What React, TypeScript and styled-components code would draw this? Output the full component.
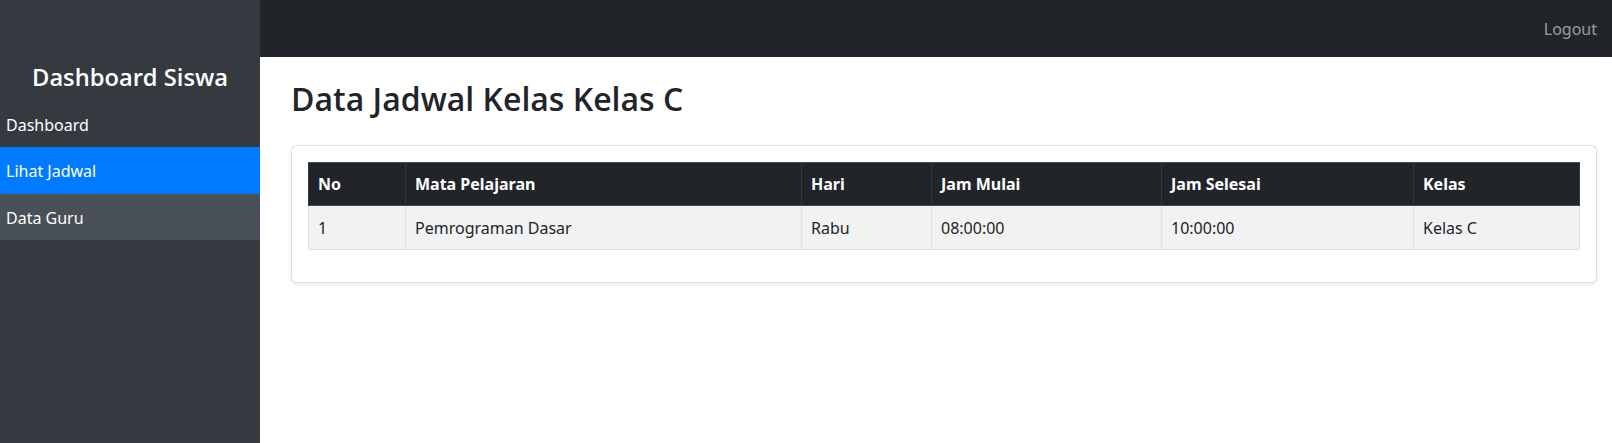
import React from "react";
import styled, { createGlobalStyle } from "styled-components";

const Global = createGlobalStyle`
  html, body { margin: 0; padding: 0; background: #fff; }
  body {
    font-family: "Noto Sans", "Open Sans", sans-serif;
    font-size: 16px;
    line-height: 1.5;
    color: #212529;
  }
  * { box-sizing: border-box; }
`;

const Layout = styled.div`
  display: flex;
  min-height: 443px;
`;

const Sidebar = styled.aside`
  width: 260px;
  flex: 0 0 260px;
  background: #343a40;
  color: #fff;
  padding-top: 63px;
`;

const Brand = styled.h4`
  margin: 0 0 9px;
  font-family: "Open Sans", "Noto Sans", sans-serif;
  font-size: 23.7px;
  line-height: 28.8px;
  font-weight: 600;
  text-align: center;
  color: #fff;
`;

const NavList = styled.nav`
  display: flex;
  flex-direction: column;
`;

const NavItem = styled.a<{ $active?: boolean; $hover?: boolean }>`
  display: block;
  padding: 12px 6px 10px;
  line-height: 24.5px;
  color: #fff;
  text-decoration: none;
  background: ${(p) => (p.$active ? "#007bff" : p.$hover ? "#495057" : "transparent")};
`;

const Main = styled.div`
  flex: 1;
  display: flex;
  flex-direction: column;
`;

const TopBar = styled.header`
  height: 57px;
  background: #212529;
  display: flex;
  align-items: center;
  justify-content: flex-end;
  padding: 0 16px;
`;

const TopLink = styled.a`
  color: rgba(255, 255, 255, 0.55);
  text-decoration: none;
  font-size: 16px;
  line-height: 24px;
`;

const Content = styled.main`
  padding: 0 16px 0 31px;
`;

const Title = styled.h2`
  margin: 23px 0 26.5px;
  font-family: "Open Sans", "Noto Sans", sans-serif;
  font-size: 32px;
  line-height: 38.4px;
  font-weight: 600;
  color: #212529;
`;

const Card = styled.section`
  border: 1px solid rgba(0, 0, 0, 0.125);
  border-radius: 6px;
  background: #fff;
  box-shadow: 0 2px 4px rgba(0, 0, 0, 0.075);
`;

const CardBody = styled.div`
  padding: 16px;
`;

const Table = styled.table`
  width: 100%;
  border-collapse: collapse;
  table-layout: fixed;
  margin-bottom: 16px;
  color: #212529;
`;

const HeadCell = styled.th`
  background: #212529;
  color: #fff;
  font-weight: 700;
  text-align: left;
  padding: 9.25px 9px;
  line-height: 24px;
  border: 1px solid #32383e;
  border-top-color: #454d55;
  border-bottom-color: #454d55;
`;

const BodyCell = styled.td`
  background: #f2f2f2;
  padding: 9.25px 9px;
  line-height: 24px;
  border: 1px solid #dee2e6;
`;

const columns = [
  { label: "No", width: 97 },
  { label: "Mata Pelajaran", width: 396 },
  { label: "Hari", width: 130 },
  { label: "Jam Mulai", width: 230 },
  { label: "Jam Selesai", width: 252 },
  { label: "Kelas", width: 166 },
];

const rows = [["1", "Pemrograman Dasar", "Rabu", "08:00:00", "10:00:00", "Kelas C"]];

export default function App() {
  return (
    <>
      <Global />
      <Layout>
        <Sidebar>
          <Brand>Dashboard Siswa</Brand>
          <NavList>
            <NavItem href="#">Dashboard</NavItem>
            <NavItem href="#" $active>Lihat Jadwal</NavItem>
            <NavItem href="#" $hover>Data Guru</NavItem>
          </NavList>
        </Sidebar>
        <Main>
          <TopBar>
            <TopLink href="#">Logout</TopLink>
          </TopBar>
          <Content>
            <Title>Data Jadwal Kelas Kelas C</Title>
            <Card>
              <CardBody>
                <Table>
                  <colgroup>
                    {columns.map((c) => (
                      <col key={c.label} style={{ width: c.width }} />
                    ))}
                  </colgroup>
                  <thead>
                    <tr>
                      {columns.map((c) => (
                        <HeadCell key={c.label}>{c.label}</HeadCell>
                      ))}
                    </tr>
                  </thead>
                  <tbody>
                    {rows.map((r, i) => (
                      <tr key={i}>
                        {r.map((v, j) => (
                          <BodyCell key={j}>{v}</BodyCell>
                        ))}
                      </tr>
                    ))}
                  </tbody>
                </Table>
              </CardBody>
            </Card>
          </Content>
        </Main>
      </Layout>
    </>
  );
}
